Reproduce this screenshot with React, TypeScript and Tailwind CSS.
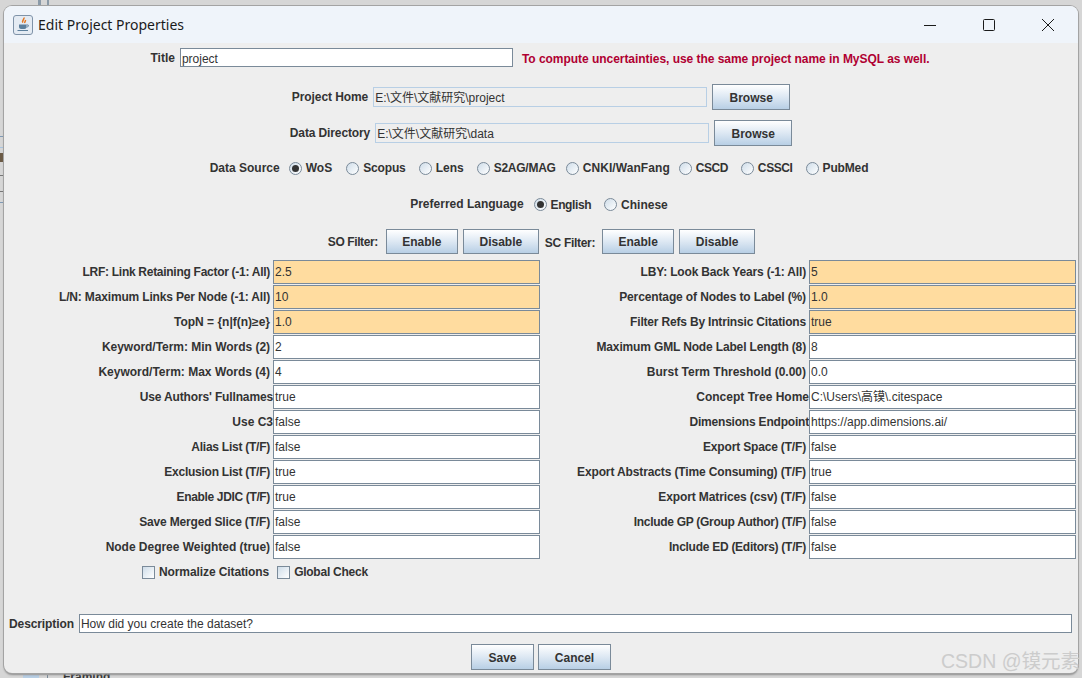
import type { ReactNode } from 'react'

const sans = '[font-family:"Liberation_Sans","Noto_Sans_CJK_SC",sans-serif]'

type RowData = { label: string; value: string; hot?: boolean; tight?: string; flush?: boolean }

const leftRows: RowData[] = [
  { label: 'LRF: Link Retaining Factor (-1: All)', value: '2.5', hot: true, tight: 'tracking-[-0.28px]' },
  { label: 'L/N: Maximum Links Per Node (-1: All)', value: '10', hot: true, tight: 'tracking-[-0.16px]' },
  { label: 'TopN = {n|f(n)≥e}', value: '1.0', hot: true },
  { label: 'Keyword/Term: Min Words (2)', value: '2', tight: 'tracking-[-0.03px]' },
  { label: 'Keyword/Term: Max Words (4)', value: '4' },
  { label: "Use Authors' Fullnames", value: 'true', tight: 'tracking-[-0.14px]', flush: true },
  { label: 'Use C3', value: 'false', flush: true },
  { label: 'Alias List (T/F)', value: 'false', tight: 'tracking-[-0.25px]' },
  { label: 'Exclusion List (T/F)', value: 'true', tight: 'tracking-[-0.25px]' },
  { label: 'Enable JDIC (T/F)', value: 'true', tight: 'tracking-[-0.35px]' },
  { label: 'Save Merged Slice (T/F)', value: 'false', tight: 'tracking-[-0.17px]' },
  { label: 'Node Degree Weighted (true)', value: 'false', tight: 'tracking-[-0.03px]' },
]

const rightRows: RowData[] = [
  { label: 'LBY: Look Back Years (-1: All)', value: '5', hot: true, tight: 'tracking-[-0.17px]' },
  { label: 'Percentage of Nodes to Label (%)', value: '1.0', hot: true, tight: 'tracking-[-0.12px]' },
  { label: 'Filter Refs By Intrinsic Citations', value: 'true', hot: true, tight: 'tracking-[-0.18px]' },
  { label: 'Maximum GML Node Label Length (8)', value: '8', tight: 'tracking-[-0.15px]' },
  { label: 'Burst Term Threshold (0.00)', value: '0.0' },
  { label: 'Concept Tree Home', value: 'C:\\Users\\高镆\\.citespace', flush: true },
  { label: 'Dimensions Endpoint', value: 'https://app.dimensions.ai/', tight: 'tracking-[-0.2px]', flush: true },
  { label: 'Export Space (T/F)', value: 'false', tight: 'tracking-[-0.17px]' },
  { label: 'Export Abstracts (Time Consuming) (T/F)', value: 'true', tight: 'tracking-[-0.13px]' },
  { label: 'Export Matrices (csv) (T/F)', value: 'false', tight: 'tracking-[-0.11px]' },
  { label: 'Include GP (Group Author) (T/F)', value: 'false', tight: 'tracking-[-0.29px]' },
  { label: 'Include ED (Editors) (T/F)', value: 'false', tight: 'tracking-[-0.27px]' },
]

function Label({ children, tight }: { children: ReactNode; tight?: string }) {
  return <span className={`text-xs font-bold text-[#333333] whitespace-nowrap ${tight ?? ''}`}>{children}</span>
}

function Field({ value, width, height = 'h-[24px]', hot }: { value: string; width: string; height?: string; hot?: boolean }) {
  return (
    <div className={`${width} ${height} ${hot ? 'bg-[#ffdc9f]' : 'bg-white'} shrink-0 flex items-center border border-[#7a8a99] pl-px text-xs text-[#333333] whitespace-nowrap`}>
      {value}
    </div>
  )
}

function PathField({ value }: { value: string }) {
  return (
    <div className="w-[334px] h-[20px] shrink-0 flex items-center bg-[#eeeeee] border border-[#b8cfe5] pl-px pt-px text-xs text-[#333333] whitespace-nowrap">
      {value}
    </div>
  )
}

function Btn({ children, width, height = 'h-[26px]' }: { children: ReactNode; width: string; height?: string }) {
  return (
    <div className={`${width} ${height} shrink-0 flex items-center justify-center pt-px border border-[#7a8a99] bg-gradient-to-b from-white via-[#dde8f3] to-[#b8cfe5] text-xs font-bold text-[#333333]`}>
      {children}
    </div>
  )
}

function Radio({ label, on, mr, text = '' }: { label: string; on?: boolean; mr: string; text?: string }) {
  return (
    <div className={`flex items-center ${mr}`}>
      <div className="w-[13px] h-[13px] rounded-full border border-[#7a8a99] bg-gradient-to-br from-[#cfdde9] to-white flex items-center justify-center">
        {on && <div className="w-[7px] h-[7px] rounded-full bg-[#333333]" />}
      </div>
      <span className={`ml-[4px] text-xs font-bold text-[#333333] whitespace-nowrap ${text}`}>{label}</span>
    </div>
  )
}

function Check({ label, tight }: { label: string; tight: string }) {
  return (
    <div className="flex items-center gap-[4px]">
      <div className="w-[13px] h-[13px] border border-[#7a8a99] bg-gradient-to-br from-[#cfdde9] to-white" />
      <Label tight={tight}>{label}</Label>
    </div>
  )
}

function JavaIcon() {
  return (
    <svg width="20" height="20" viewBox="0 0 20 20">
      <rect x="0.5" y="0.5" width="19" height="19" rx="2.5" fill="#e4ebf3" stroke="#7f93a8" />
      <path d="M10.8 2.5c1.2 1.8-2.4 2.8-1 5.2M12.4 5c.5 1.1-1.2 1.6-.5 3" fill="none" stroke="#e5761f" strokeWidth="1.5" />
      <path d="M6 9.5h7.5v2.5c0 1.2-1 2-2 2h-3.5c-1 0-2-.8-2-2z" fill="#5c7f9c" />
      <path d="M13.5 10h1.5c.8 0 .8 2-1.5 2.2" fill="none" stroke="#5c7f9c" />
      <path d="M4.5 15.5h10.5" stroke="#5c7f9c" strokeWidth="1.2" />
    </svg>
  )
}

function Row({ row }: { row: RowData }) {
  return (
    <div className={`h-[24px] flex items-center ${row.flush ? '' : 'gap-[3px]'}`}>
      <div className={`${row.flush ? 'w-[269px]' : 'w-[266px]'} text-right text-xs leading-4`}>
        <Label tight={row.tight}>{row.label}</Label>
      </div>
      <Field value={row.value} width="w-[267px]" hot={row.hot} />
    </div>
  )
}

export default function App() {
  return (
    <div className={`${sans} relative w-[1082px] h-[678px] overflow-hidden bg-[#d6d6d6] pl-[4px] pt-[6px]`}>
      {/* bits of the window behind the dialog */}
      <div className="absolute left-[38px] top-0 w-[3px] h-[6px] bg-[#8a9aa8]" />
      <div className="absolute left-[47px] top-0 w-[2px] h-[6px] bg-[#8a9aa8]" />
      <div className="absolute left-0 top-[136px] w-[4px] h-px bg-[#7f99b5]" />
      <div className="absolute left-0 top-[147px] w-[4px] h-px bg-[#a8c4e0]" />
      <div className="absolute left-0 top-[153px] w-[4px] h-[9px] bg-[#6b5a45]" />
      <div className="absolute left-0 top-[175px] w-[4px] h-px bg-[#777777]" />
      <div className="absolute left-0 top-[191px] w-[4px] h-px bg-[#777777]" />
      <div className="absolute left-0 top-[202px] w-[4px] h-px bg-[#7f99b5]" />
      <div className="absolute left-[23px] top-[675px] w-[16px] h-[3px] bg-[#b8cfe5]" />
      <div className="absolute left-[47px] top-[675px] w-px h-[3px] bg-[#7a8a99]" />
      <div className="absolute left-[63px] top-[669px] text-xs font-bold text-[#333333]">Framing</div>

      <div className="relative z-10 w-[1074px] h-[667px] rounded-[8px] overflow-hidden bg-[#eeeeee] shadow-[0_0_0_1px_#a3a3a3,0_2px_2px_#8f8f8f]">
        <div className="h-[37px] bg-[#eff4fa] flex items-center pl-[9px] pr-px">
          <JavaIcon />
          <span className="ml-[5px] text-[14px] text-[#1a1a1a] [font-family:'Noto_Sans',sans-serif]">Edit Project Properties</span>
          <div className="ml-auto flex">
            <div className="w-[59px] h-[37px] flex items-center justify-center">
              <svg width="12" height="12" viewBox="0 0 12 12"><path d="M0 6.5h12" stroke="#1a1a1a" /></svg>
            </div>
            <div className="w-[59px] h-[37px] flex items-center justify-center">
              <svg width="12" height="12" viewBox="0 0 12 12"><rect x="0.5" y="0.5" width="11" height="11" rx="1" fill="none" stroke="#1a1a1a" /></svg>
            </div>
            <div className="w-[59px] h-[37px] flex items-center justify-center">
              <svg width="12" height="12" viewBox="0 0 12 12"><path d="M0 0l12 12M12 0L0 12" stroke="#1a1a1a" /></svg>
            </div>
          </div>
        </div>

        <div className="mt-[5px] h-[19px] flex items-center justify-center pr-[2px]">
          <Label>Title</Label>
          <div className="w-[333px] h-[19px] ml-[5px] bg-white flex items-center border border-[#7a8a99] pl-px pt-[2px] text-xs text-[#333333]">project</div>
          <span className="ml-[9px] pt-[2px] text-xs font-bold text-[#b00032] whitespace-nowrap tracking-[-0.04px]">To compute uncertainties, use the same project name in MySQL as well.</span>
        </div>

        <div className="mt-[17px] h-[26px] flex items-center justify-center">
          <Label tight="tracking-[-0.08px]">Project Home</Label>
          <div className="ml-[5px] mr-[5px]"><PathField value="E:\文件\文献研究\project" /></div>
          <Btn width="w-[78px]">Browse</Btn>
        </div>

        <div className="mt-[10px] h-[26px] flex items-center justify-center">
          <Label tight="tracking-[-0.12px]">Data Directory</Label>
          <div className="ml-[5px] mr-[5px]"><PathField value="E:\文件\文献研究\data" /></div>
          <Btn width="w-[78px]">Browse</Btn>
        </div>

        <div className="mt-[12px] h-[20px] flex items-center justify-center pr-[4px]">
          <div className="mr-[9px] pb-[2px]"><Label>Data Source</Label></div>
          <Radio label="WoS" on mr="mr-[14px]" />
          <Radio label="Scopus" mr="mr-[13px]" text="tracking-[-0.15px]" />
          <Radio label="Lens" mr="mr-[13px]" />
          <Radio label="S2AG/MAG" mr="mr-[10px]" text="tracking-[-0.25px]" />
          <Radio label="CNKI/WanFang" mr="mr-[9px]" text="tracking-[0.08px]" />
          <Radio label="CSCD" mr="mr-[13px]" text="tracking-[-0.5px]" />
          <Radio label="CSSCI" mr="mr-[13px]" text="tracking-[-0.4px]" />
          <Radio label="PubMed" mr="" text="tracking-[-0.15px]" />
        </div>

        <div className="mt-[16px] h-[20px] flex items-center justify-center pr-[4px]">
          <div className="mr-[10px] pb-[2px]"><Label>Preferred Language</Label></div>
          <Radio label="English" on mr="mr-[13px]" text="pt-[2px] tracking-[-0.4px]" />
          <Radio label="Chinese" mr="" text="pt-[2px]" />
        </div>

        <div className="mt-[15px] h-[25px] flex items-center justify-center pl-px">
          <Label tight="tracking-[-0.4px]">SO Filter:</Label>
          <div className="ml-[8px] mr-[5px]"><Btn width="w-[72px]" height="h-[25px]">Enable</Btn></div>
          <Btn width="w-[76px]" height="h-[25px]">Disable</Btn>
          <div className="ml-[6px] mr-[7px]"><Label tight="tracking-[-0.3px]">SC Filter:</Label></div>
          <div className="mr-[5px]"><Btn width="w-[72px]" height="h-[25px]">Enable</Btn></div>
          <Btn width="w-[76px]" height="h-[25px]">Disable</Btn>
        </div>

        <div className="mt-[6px] grid grid-cols-[536px_536px] gap-y-[1px]">
          {leftRows.map((r, i) => (
            <div key={r.label} className="contents">
              <Row row={r} />
              <Row row={rightRows[i]} />
            </div>
          ))}
        </div>

        <div className="mt-[5px] h-[16px] flex items-center gap-[8px] pl-[138px]">
          <Check label="Normalize Citations" tight="tracking-[-0.1px]" />
          <Check label="Global Check" tight="tracking-[-0.25px]" />
        </div>

        <div className="mt-[34px] h-[19px] flex items-center pl-[5px]">
          <Label tight="tracking-[-0.1px]">Description</Label>
          <Field value="How did you create the dataset?" width="w-[993px] ml-[5px]" height="h-[19px]" />
        </div>

        <div className="mt-[11px] flex justify-center gap-[4px]">
          <Btn width="w-[63px]">Save</Btn>
          <Btn width="w-[73px]">Cancel</Btn>
        </div>
      </div>

      <div className="absolute z-20 right-[2px] bottom-[2px] text-[19.5px] text-[#cccccc] whitespace-nowrap">CSDN @镆元素</div>
    </div>
  )
}
